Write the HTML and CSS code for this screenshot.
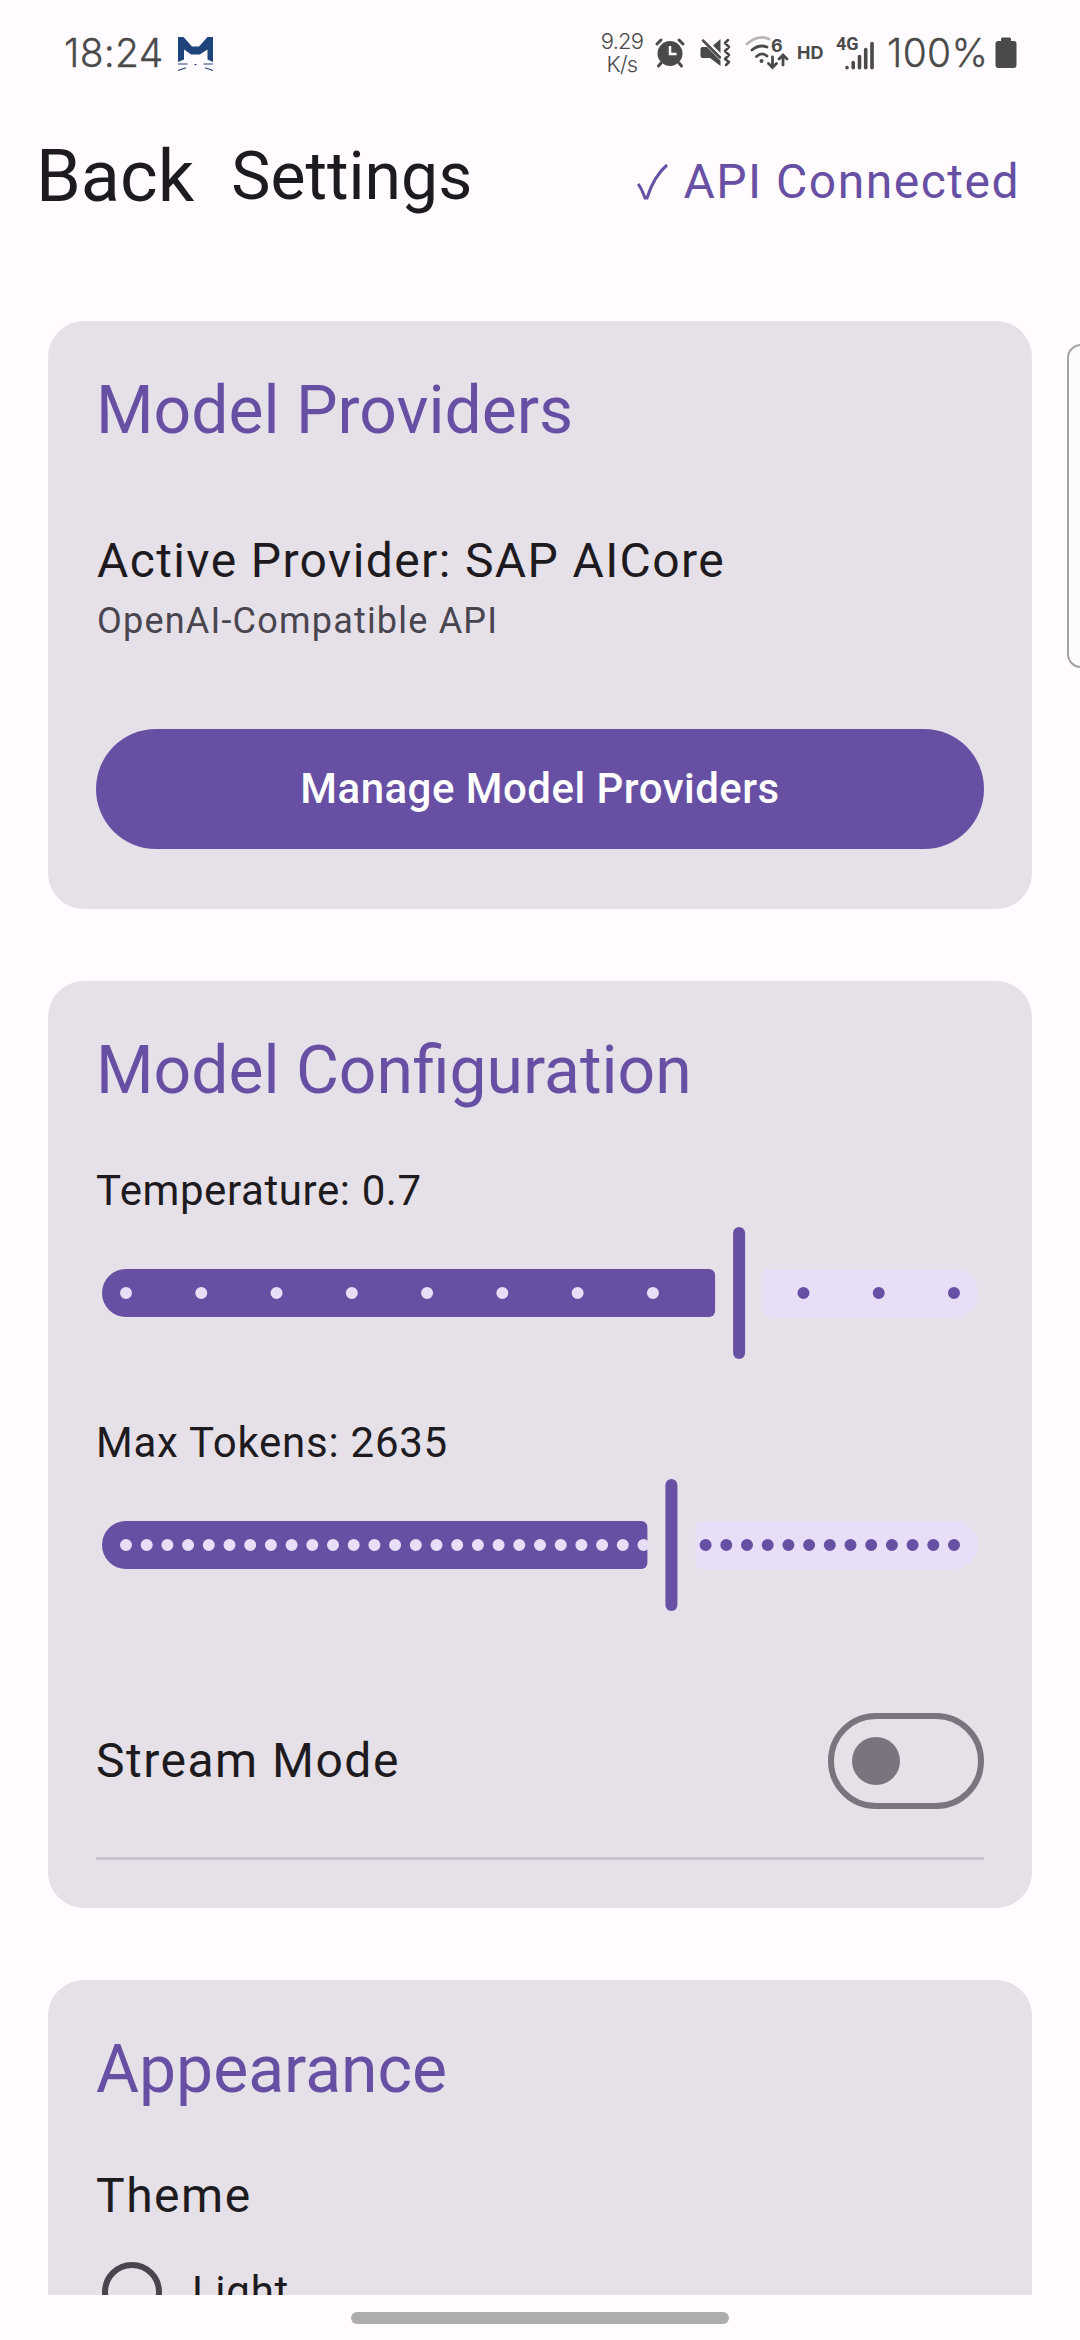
FILE: index.html
```html
<!DOCTYPE html>
<html lang="en">
<head>
<meta charset="utf-8">
<title>Settings</title>
<link rel="stylesheet" href="styles.css">
</head>
<body>
<div class="screen">
  <div class="status">
    <span class="clock">18:24</span>
    <svg class="app-icon" width="35" height="35" viewBox="0 0 35 35"><path fill="#1f447c" d="M0 0h5.500l8.500 9.500h7L29.500 0H35v25l-5.500-2.500v-10l-5.500 3.500-2 1.500h-9l-2-1.500-5-3.500v10L0 25zM16 27h3l-1.500 1.500z"/><path fill="none" stroke="#1f447c" stroke-width="1.200" d="M0 27h9.500M25.500 27H35M0 33.500l8-2.700M35 33.500l-8-2.700"/></svg>
    <div class="speed"><span>9.29</span><span>K/s</span></div>
    <svg class="alarm" width="30" height="30" viewBox="0 0 30 30"><circle cx="15" cy="15.500" r="12.500" fill="#4a4a4a"/><path fill="none" stroke="#4a4a4a" stroke-width="3" stroke-linecap="round" d="M2 6l4-4M28 6l-4-4M6 25l-2.500 3M24 25l2.500 3"/><path fill="none" stroke="#fffbfe" stroke-width="2.500" d="M15 8v8h6.500"/></svg>
    <svg class="mute" width="31" height="30" viewBox="0 0 31 30"><path fill="#4a4a4a" d="M2.500 9H7l13.500 13.500V28L10 20H2.500Q.5 20 .5 18v-7Q.5 9 2.500 9zM13 7.500L20.500 1v14z"/><path fill="none" stroke="#4a4a4a" stroke-width="2.500" stroke-linecap="round" stroke-linejoin="round" d="M3 2.500l17 17M28 2l-3 3 4 4-4 4 4 4-4 4 4 3-3 3"/></svg>
    <svg class="wifi" width="44" height="35" viewBox="0 0 44 35"><g fill="none" stroke-linecap="round"><path stroke="#b8b6b8" stroke-width="2.800" d="M2 8Q13-2 24 3"/><path stroke="#4a4a4a" stroke-width="2.800" d="M7 14Q14 8 22 11M11.500 20.500Q17 15.500 22 20M27.500 21v10M23.500 27.500l4 4 4-4M38 29V20M34 23l4-4 4 4"/></g><circle cx="16.500" cy="25" r="2" fill="#4a4a4a"/><text class="wifi-gen" x="26" y="15.500">6</text></svg>
    <span class="hd">HD</span>
    <svg class="cell" width="40" height="36" viewBox="0 0 40 36"><text class="cell-gen" x="0" y="14">4G</text><path fill="none" stroke="#4a4a4a" stroke-width="3.600" stroke-linecap="round" d="M11 31.500v.2M17.200 26.500v5.200M23.500 20.500v11.200M29.700 13.500v18.200M36 7.500v24.200"/></svg>
    <span class="percent">100%</span>
    <svg class="battery" width="22" height="32" viewBox="0 0 22 32"><path fill="#4a4a4a" d="M6 2Q6 .5 7.500.5h7Q16 .5 16 2v2h3q2.500 0 2.500 3v21q0 3-3 3h-15q-3 0-3-3V7q0-3 2.500-3h3z"/></svg>
  </div>

  <header class="topbar">
    <span class="back">Back</span>
    <h1 class="heading">Settings</h1>
    <div class="api">
      <svg width="34" height="38" viewBox="0 0 34 38"><path fill="none" stroke="#6750a4" stroke-width="3" d="M2 21Q5 24 9 35h2Q18 13 31 2"/></svg>
      <span>API Connected</span>
    </div>
  </header>

  <main class="content">
    <section class="card">
      <h2 class="title">Model Providers</h2>
      <p class="body provider">Active Provider: SAP AICore</p>
      <p class="caption">OpenAI-Compatible API</p>
      <button class="manage">Manage Model Providers</button>
    </section>

    <section class="card">
      <h2 class="title">Model Configuration</h2>
      <p class="label temperature">Temperature: 0.7</p>
      <svg class="slider" viewBox="96 0 888 144">
        <path class="on" d="M126 48H709.100a6 6 0 0 1 6 6V90a6 6 0 0 1-6 6H126a24 24 0 0 1 0-48z"/>
        <path class="off" d="M954 48H769.100a6 6 0 0 0-6 6V90a6 6 0 0 0 6 6H954a24 24 0 0 0 0-48z"/>
        <rect class="on" x="733.100" y="6" width="12" height="132" rx="6"/>
        <path class="ticks-on" stroke-dasharray="0 75.2727" d="M126 72H660"/>
        <path class="ticks-off" stroke-dasharray="0 75.2727" d="M803.450 72H955"/>
      </svg>
      <p class="label">Max Tokens: 2635</p>
      <svg class="slider" viewBox="96 0 888 144">
        <path class="on" d="M126 48H641.400a6 6 0 0 1 6 6V90a6 6 0 0 1-6 6H126a24 24 0 0 1 0-48z"/>
        <path class="off" d="M954 48H701.400a6 6 0 0 0-6 6V90a6 6 0 0 0 6 6H954a24 24 0 0 0 0-48z"/>
        <rect class="on" x="665.400" y="6" width="12" height="132" rx="6"/>
        <path class="ticks-on" stroke-dasharray="0 20.7" d="M126 72H645"/>
        <path class="ticks-off" stroke-dasharray="0 20.7" d="M705.600 72H955"/>
      </svg>
      <div class="stream">
        <span class="body">Stream Mode</span>
        <span class="switch"><span class="thumb"></span></span>
      </div>
      <div class="divider"></div>
    </section>

    <section class="card">
      <h2 class="title">Appearance</h2>
      <p class="body theme">Theme</p>
      <div class="option"><span class="radio"></span><span class="label">Light</span></div>
    </section>
  </main>

  <footer class="nav"><span class="handle"></span></footer>
  <div class="edge"></div>
</div>
</body>
</html>
```
FILE: styles.css
```css
* { box-sizing: border-box; margin: 0; padding: 0; }
body { background: #fffbfe; font-family: Roboto, sans-serif; color: #1d1b20; }
.screen { position: relative; width: 1080px; height: 2340px; overflow: hidden; display: flex; flex-direction: column; }

.status { display: flex; align-items: flex-start; height: 117px; flex: none; padding-left: 64px; color: #4a4a4a; font-family: Inter, sans-serif; }
.status svg { flex: none; overflow: visible; }
.clock, .percent { font-size: 39px; line-height: 48px; font-weight: 300; margin-top: 29px; white-space: nowrap; -webkit-text-stroke: 0.3px #4a4a4a; }
.clock { width: 100px; letter-spacing: 0.3px; }
.app-icon { margin: 37px 0 0 14px; }
.speed { display: flex; flex-direction: column; align-items: center; width: 46px; margin: 30px 0 0 386px; font-size: 22px; line-height: 23px; font-weight: 300; letter-spacing: -0.8px; }
.alarm { margin: 38px 0 0 10px; }
.mute { margin: 38px 0 0 15px; }
.wifi { margin: 36px 0 0 14px; }
.hd { width: 28px; margin: 42px 0 0 8px; font-size: 18px; line-height: 22px; font-weight: 700; }
.cell { margin: 36px 0 0 11px; }
.percent { width: 102px; margin-left: 11px; letter-spacing: 0.3px; }
.battery { margin: 37px 0 0 6px; }
.wifi-gen { font: 700 18px Inter, sans-serif; fill: #4a4a4a; }
.cell-gen { font: 700 18px Roboto, sans-serif; fill: #4a4a4a; }

.topbar { display: flex; align-items: center; height: 120px; flex: none; padding: 0 60px 0 36px; }
.back { font-size: 72px; line-height: 96px; }
.heading { font-size: 66px; line-height: 84px; font-weight: 400; margin-left: 37px; }
.api { display: flex; align-items: center; gap: 14px; margin: 9px 0 0 auto; color: #6750a4; font-size: 48px; line-height: 72px; letter-spacing: 1.5px; }

.content { flex: none; height: 2058px; padding: 84px 48px 0; overflow: hidden; display: flex; flex-direction: column; gap: 72px; }
.card { flex: none; background: #e6e0e9; border-radius: 36px; padding: 48px; display: flex; flex-direction: column; }
.title { font-size: 66px; line-height: 84px; font-weight: 400; color: #6750a4; }
.body { font-size: 48px; line-height: 72px; letter-spacing: 1.5px; }
.provider { margin-top: 72px; padding-left: 1px; letter-spacing: 1.38px; }
.caption { font-size: 36px; line-height: 48px; padding-left: 1px; letter-spacing: 1.2px; color: #49454f; }
.manage { height: 120px; margin: 84px 0 12px; border: 0; border-radius: 60px; background: #6750a4; color: #fff; font: 500 42px/60px Roboto, sans-serif; letter-spacing: 0.48px; }
.label { font-size: 42px; line-height: 60px; letter-spacing: 0.75px; margin-top: 48px; }
.temperature { letter-spacing: 0.6px; }
.slider { width: 888px; height: 144px; display: block; }
.on { fill: #6750a4; }
.off { fill: #e8def8; }
.ticks-on, .ticks-off { fill: none; stroke-width: 12px; stroke-linecap: round; }
.ticks-on { stroke: #e8def8; }
.ticks-off { stroke: #6750a4; }
.stream { display: flex; align-items: center; justify-content: space-between; margin-top: 96px; }
.switch { width: 156px; height: 96px; border: 6px solid #79747e; border-radius: 48px; display: flex; align-items: center; padding-left: 18px; }
.thumb { width: 48px; height: 48px; border-radius: 50%; background: #79747e; }
.divider { height: 3px; margin-top: 48px; background: #cac4d0; }
.theme { margin-top: 48px; }
.option { display: flex; align-items: center; height: 60px; gap: 30px; margin-top: 30px; padding-left: 6px; }
.option .label { margin: 0; }
.radio { width: 60px; height: 60px; border: 6px solid #49454f; border-radius: 50%; }

.nav { flex: 1; display: flex; justify-content: center; padding-top: 17px; }
.handle { width: 378px; height: 12px; border-radius: 6px; background: #aeacae; }
.edge { position: absolute; left: 1067px; top: 344px; width: 30px; height: 324px; border: 2px solid #a3a3a3; border-radius: 14px; background: #fcfcfc; }
```
